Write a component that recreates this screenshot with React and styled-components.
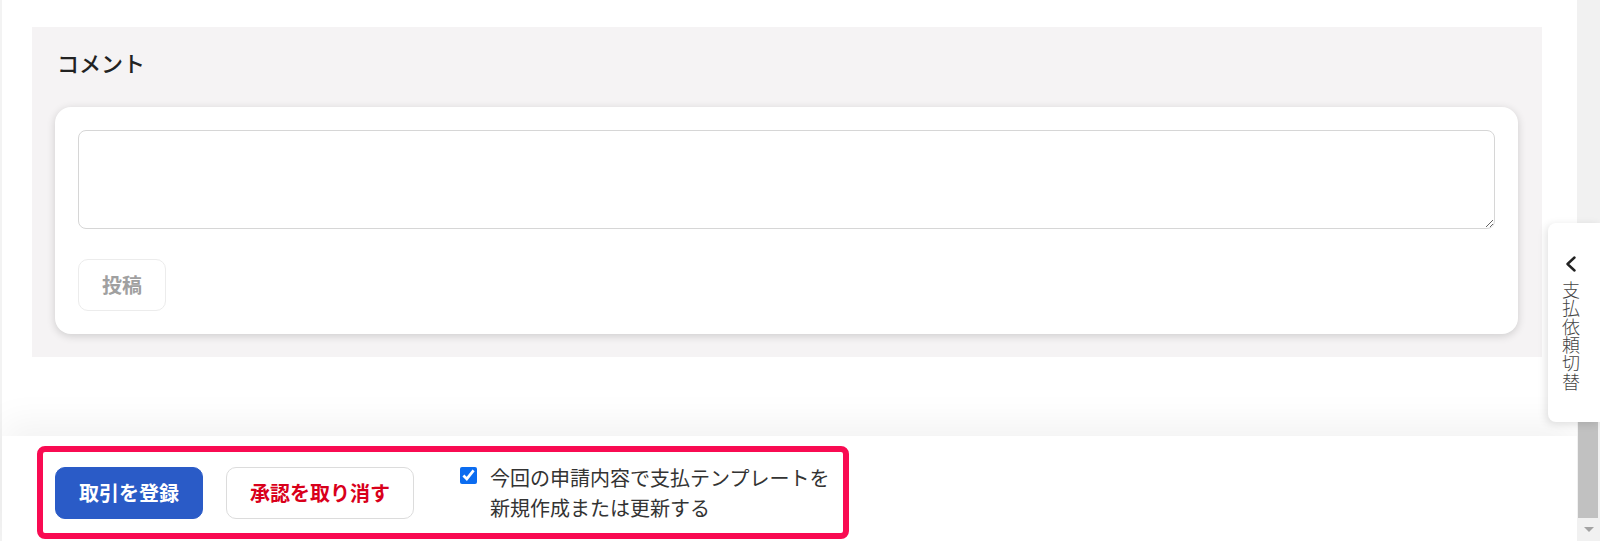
import React from "react";
import styled, { createGlobalStyle } from "styled-components";

const GlobalStyle = createGlobalStyle`
  html, body {
    margin: 0;
    padding: 0;
    height: 100%;
    overflow: hidden;
    background: #ffffff;
  }
  body {
    font-family: "Noto Sans CJK JP", "Noto Sans", sans-serif;
    color: #333333;
  }
  #root {
    height: 100%;
  }
`;

const Page = styled.div`
  position: relative;
  display: flex;
  height: 100vh;
  width: 100%;
`;

const Main = styled.div`
  flex: 1;
  display: flex;
  flex-direction: column;
  min-width: 0;
  border-left: 2px solid #f3f3f3;
`;

const Content = styled.div`
  flex: 1;
  padding: 27px 35px 0 30px;
`;

const Section = styled.section`
  background: #f5f3f4;
  padding: 19px 24px 23px 23px;
`;

const Heading = styled.h2`
  margin: 0 0 28px 2px;
  font-size: 22px;
  line-height: 33px;
  font-weight: 500;
  color: #222222;
`;

const Card = styled.div`
  background: #ffffff;
  border-radius: 16px;
  padding: 23px;
  box-shadow: 0 2px 8px rgba(0, 0, 0, 0.16);
`;

const CommentInput = styled.textarea`
  display: block;
  box-sizing: border-box;
  width: 100%;
  height: 99px;
  border: 1px solid #d6d6d6;
  border-radius: 8px;
  padding: 8px 12px;
  font-family: inherit;
  font-size: 16px;
  resize: vertical;
  outline: none;
`;

const Button = styled.button`
  box-sizing: border-box;
  height: 52px;
  padding: 0 ${({ $pad }) => $pad || 23}px;
  border-radius: 10px;
  font-family: "Noto Sans CJK JP", sans-serif;
  font-size: 20px;
  font-weight: 700;
  line-height: 1;
  cursor: pointer;
  background: ${({ $variant }) => ($variant === "primary" ? "#2a5bc7" : "#ffffff")};
  color: ${({ $variant }) =>
    $variant === "primary" ? "#ffffff" : $variant === "danger" ? "#d9001b" : "#a0a0a0"};
  border: 1px solid
    ${({ $variant }) => ($variant === "primary" ? "#2a5bc7" : $variant === "danger" ? "#dcdcdc" : "#ececec")};
`;

const PostButton = styled(Button)`
  margin-top: 30px;
`;

const BottomBar = styled.div`
  height: 105px;
  box-sizing: border-box;
  padding: 10px 0 0 35px;
  background: #ffffff;
  box-shadow: 0 -14px 36px rgba(0, 0, 0, 0.05);
`;

const Highlight = styled.div`
  display: inline-flex;
  align-items: center;
  border: 6px solid #f90b52;
  border-radius: 8px;
  padding: 11px 14px 10px 12px;
`;

const ButtonGroup = styled.div`
  display: flex;
  gap: 23px;
  margin-right: 46px;
`;

const CheckLabel = styled.label`
  display: flex;
  align-items: flex-start;
  gap: 13px;
  font-size: 20px;
  line-height: 30px;
  color: #333333;
  cursor: pointer;
`;

const CheckBox = styled.input`
  width: 17px;
  height: 17px;
  margin: 4px 0 0;
  accent-color: #0b6cf0;
  flex-shrink: 0;
`;

const Scrollbar = styled.div`
  width: 23px;
  display: flex;
  flex-direction: column;
  background: #f1f1f1;
`;

const ScrollTrack = styled.div`
  flex: 1;
  display: flex;
  flex-direction: column;
  justify-content: flex-end;
  padding: 0 2px 0 1px;
`;

const ScrollThumb = styled.div`
  height: 290px;
  background: #c1c1c1;
`;

const ScrollArrow = styled.div`
  height: 23px;
  display: flex;
  align-items: center;
  justify-content: center;
  &::after {
    content: "";
    border-left: 5px solid transparent;
    border-right: 5px solid transparent;
    border-top: 5px solid #a3a3a3;
  }
`;

const SideTab = styled.button`
  position: absolute;
  top: 223px;
  right: 0;
  width: 52px;
  height: 199px;
  box-sizing: border-box;
  display: flex;
  flex-direction: column;
  align-items: center;
  gap: 9px;
  padding: 33px 6px 0 0;
  background: #ffffff;
  border: none;
  border-radius: 8px 0 0 8px;
  box-shadow: -2px 2px 8px rgba(0, 0, 0, 0.12);
  cursor: pointer;
`;

const TabText = styled.span`
  writing-mode: vertical-rl;
  font-family: "Noto Sans CJK JP", sans-serif;
  font-size: 18px;
  font-weight: 300;
  line-height: 18px;
  letter-spacing: 0.4px;
  color: #444444;
`;

const ChevronLeft = () => (
  <svg width="12" height="16" viewBox="0 0 12 16" fill="none">
    <polyline
      points="9.5,1.5 2.5,8 9.5,14.5"
      stroke="#222"
      strokeWidth="2.4"
      strokeLinecap="round"
      strokeLinejoin="round"
    />
  </svg>
);

export default function App() {
  return (
    <>
      <GlobalStyle />
      <Page>
        <Main>
          <Content>
            <Section>
              <Heading>コメント</Heading>
              <Card>
                <CommentInput />
                <PostButton $pad={23}>投稿</PostButton>
              </Card>
            </Section>
          </Content>
          <BottomBar>
            <Highlight>
              <ButtonGroup>
                <Button $variant="primary" $pad={23}>取引を登録</Button>
                <Button $variant="danger" $pad={23}>承認を取り消す</Button>
              </ButtonGroup>
              <CheckLabel>
                <CheckBox type="checkbox" defaultChecked />
                <span>
                  今回の申請内容で支払テンプレートを
                  <br />
                  新規作成または更新する
                </span>
              </CheckLabel>
            </Highlight>
          </BottomBar>
        </Main>
        <Scrollbar>
          <ScrollTrack>
            <ScrollThumb />
          </ScrollTrack>
          <ScrollArrow />
        </Scrollbar>
        <SideTab>
          <ChevronLeft />
          <TabText>支払依頼切替</TabText>
        </SideTab>
      </Page>
    </>
  );
}
